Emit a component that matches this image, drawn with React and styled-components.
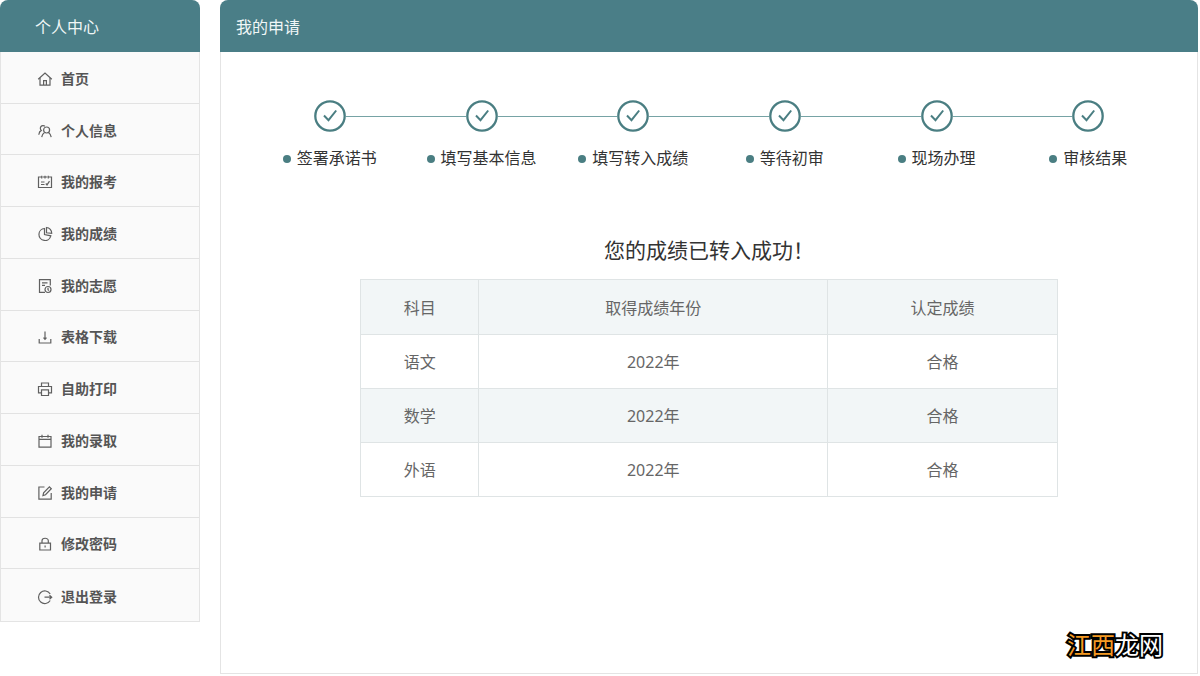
import React from "react";
import styled, { createGlobalStyle } from "styled-components";

const GlobalStyle = createGlobalStyle`
  *, *::before, *::after { box-sizing: border-box; }
  body {
    margin: 0;
    background: #fff;
    color: #333;
    font-family: "Noto Sans", "Noto Sans CJK SC", sans-serif;
    font-size: 16px;
    line-height: 24px;
  }
  h1, h2, p, ul, ol { margin: 0; padding: 0; font-weight: 400; }
  ul, ol { list-style: none; }
`;

const Page = styled.div`
  display: flex;
  align-items: flex-start;
  gap: 20px;
  min-height: 100vh;
  padding: 0 2px 2px 0;
`;

const Sidebar = styled.aside`
  flex: 0 0 200px;
`;

const PanelHeader = styled.header`
  display: flex;
  align-items: center;
  height: 52px;
  padding: 2px ${(p) => p.$inset}px 0;
  border-radius: 8px 8px 0 0;
  background: #4a7e87;
  color: #f0f7f7;
`;

const PanelTitle = styled.h2`
  font-size: 16px;
`;

const Menu = styled.ul`
  display: grid;
  grid-auto-rows: 1fr;
  min-height: 570px;
  border: 1px solid #e4e4e4;
  border-top: 0;
  background: #fafafa;
`;

const MenuItem = styled.li`
  display: flex;
  border-bottom: 1px solid #e2e2e2;
  &:last-child { border-bottom: 0; }
`;

const MenuLink = styled.a`
  display: flex;
  flex: 1;
  align-items: center;
  gap: 8px;
  padding: 3px 0 0 36px;
  color: #555;
  font-size: 14px;
  font-weight: 700;
  text-decoration: none;
`;

const Icon = styled.svg`
  flex: none;
  width: 16px;
  height: 16px;
  fill: none;
  stroke: #606060;
  stroke-width: 1.2;
`;

const Main = styled.main`
  position: relative;
  display: flex;
  flex: 1;
  flex-direction: column;
  align-self: stretch;
  min-width: 0;
`;

const Content = styled.div`
  flex: 1;
  padding: 48px 33px 24px;
  border: 1px solid #e4e4e4;
  border-top: 0;
`;

const Steps = styled.ol`
  display: flex;
`;

const StepItem = styled.li`
  display: grid;
  flex: 1;
  grid-template-columns: 1fr 32px 1fr;
  align-items: center;
  row-gap: 14px;
`;

const Connector = styled.span`
  height: 1px;
  background: ${(p) => (p.$hidden ? "transparent" : "#76a3a5")};
`;

const StepMark = styled.svg`
  width: 32px;
  height: 32px;
  fill: none;
  stroke: #4a7e82;
`;

const StepLabel = styled.span`
  display: flex;
  grid-column: 1 / -1;
  align-items: center;
  justify-content: center;
  gap: 6px;
  white-space: nowrap;
`;

const Dot = styled.span`
  width: 8px;
  height: 8px;
  margin-top: 2px;
  border-radius: 50%;
  background: #4a7e82;
`;

const ResultTitle = styled.h1`
  margin-top: 64px;
  font-size: 21px;
  line-height: 32px;
  text-align: center;
`;

const ScoreTable = styled.table`
  width: 100%;
  max-width: 698px;
  margin: 13px auto 0;
  border-collapse: collapse;
  table-layout: fixed;
  color: #666;
  text-align: center;
`;

const Column = styled.col`
  width: ${(p) => p.$share}%;
`;

const Row = styled.tr`
  height: 54px;
  background: ${(p) => (p.$shaded ? "#f2f6f7" : "#fff")};
`;

const HeadCell = styled.th`
  height: 55px;
  padding: 2px 0 0;
  border: 1px solid #dfe4e5;
  font-weight: 400;
`;

const Cell = styled.td`
  padding: 0;
  border: 1px solid #dfe4e5;
`;

const SiteMark = styled.p`
  position: absolute;
  right: 35px;
  bottom: 13px;
  color: #fff;
  font-size: 24px;
  font-weight: 400;
  line-height: 32px;
  -webkit-text-stroke: 4px #000;
  paint-order: stroke fill;
`;

const SiteMarkAccent = styled.span`
  color: #f59a23;
`;

const icons = {
  home: (
    <>
      <path d="M1.2 8.3 8 2l6.8 6.3" />
      <path d="M3 7v7.2h10V7" />
      <path d="M6.6 14V9.6h2.8V14" />
    </>
  ),
  user: (
    <>
      <path d="M7.9 3.2a2.7 2.7 0 1 0-3.6 4.2C2.8 8.2 2 9.8 1.8 11.8" />
      <circle cx="9.6" cy="7" r="3" />
      <path d="M7.5 9.4C5.9 10.4 5 12 4.7 14.2M11.5 9.4c1.4 1 2.4 2.6 2.7 4.8" />
    </>
  ),
  exam: (
    <>
      <path d="M4 3H1.5v10.5h13V3H12M5.500 3h5" />
      <path d="M4.700 1.800v2.700M8 1.800v2.700M11.300 1.800v2.700M4 8h3.500M4 10.500h3.500" />
      <path d="m8.800 9.500 1.200 1.400 2.500-3.800" />
    </>
  ),
  chart: (
    <>
      <path d="M7.500 2.500a6 6 0 1 0 6.300 7.300L7.500 8.500z" />
      <path d="M9.500 1.500v5.300l5.200.5c.1-3-2.100-5.600-5.200-5.800z" />
    </>
  ),
  form: (
    <>
      <path d="M8 14.4H2.500V1.600h10.800v6" />
      <path d="M5 4.800h5.500M5 7.300h3" />
      <circle cx="11" cy="11.500" r="3" />
      <path d="M11 9.800v2l1 .8" />
    </>
  ),
  download: (
    <>
      <path d="M2.200 10v4h11.600v-4" />
      <path d="M8 2.500v7.700M6.500 8.700 8 10.300l1.500-1.600" />
    </>
  ),
  print: (
    <>
      <path d="M4.500 5.500V2h7v3.500" />
      <path d="M4.500 11.800H1.500V5.500h13v6.300h-3" />
      <path d="M4.500 8.800h7v5.700h-7z" />
    </>
  ),
  calendar: (
    <>
      <path d="M2 3.500h12v10.700H2zM2 6.300h12" />
      <path d="M5 1.800v3M11 1.800v3" />
    </>
  ),
  edit: (
    <>
      <path d="M7.500 2H1.900v12.200h12.300V8" />
      <path d="m6 10.500.6-2.700 5.800-5.900 1.900 1.800-5.800 6z" />
    </>
  ),
  lock: (
    <>
      <path d="M2.800 7.200h10.700v6.800H2.800z" />
      <path d="M5 7V4.800C5 1.400 11.300 1.400 11.300 4.800V7M8.100 9.500v2" />
    </>
  ),
  logout: (
    <>
      <path d="M13.200 5A6.300 6.300 0 1 0 13.200 11.500" />
      <path d="M7.500 8.200h7M12.500 6.200l2.200 2-2.200 2" />
    </>
  ),
};

const menu = [
  ["home", "首页"],
  ["user", "个人信息"],
  ["exam", "我的报考"],
  ["chart", "我的成绩"],
  ["form", "我的志愿"],
  ["download", "表格下载"],
  ["print", "自助打印"],
  ["calendar", "我的录取"],
  ["edit", "我的申请"],
  ["lock", "修改密码"],
  ["logout", "退出登录"],
];

const steps = ["签署承诺书", "填写基本信息", "填写转入成绩", "等待初审", "现场办理", "审核结果"];

const scores = [
  ["语文", "2022年", "合格"],
  ["数学", "2022年", "合格"],
  ["外语", "2022年", "合格"],
];

export default function App() {
  return (
    <Page>
      <GlobalStyle />
      <Sidebar>
        <PanelHeader $inset={35}>
          <PanelTitle>个人中心</PanelTitle>
        </PanelHeader>
        <nav>
          <Menu>
            {menu.map(([icon, label]) => (
              <MenuItem key={label}>
                <MenuLink href={`#${icon}`}>
                  <Icon viewBox="0 0 16 16" aria-hidden="true">{icons[icon]}</Icon>
                  {label}
                </MenuLink>
              </MenuItem>
            ))}
          </Menu>
        </nav>
      </Sidebar>
      <Main>
        <PanelHeader $inset={16}>
          <PanelTitle>我的申请</PanelTitle>
        </PanelHeader>
        <Content>
          <Steps>
            {steps.map((label, i) => (
              <StepItem key={label}>
                <Connector $hidden={i === 0} />
                <StepMark viewBox="0 0 32 32" aria-hidden="true">
                  <circle cx="16" cy="16" r="14.7" strokeWidth="2.3" />
                  <path d="m10 15.500 4.500 4.700 7.700-9.700" strokeWidth="2" />
                </StepMark>
                <Connector $hidden={i === steps.length - 1} />
                <StepLabel>
                  <Dot />
                  {label}
                </StepLabel>
              </StepItem>
            ))}
          </Steps>
          <ResultTitle>您的成绩已转入成功！</ResultTitle>
          <ScoreTable>
            <colgroup>
              <Column $share={17} />
              <Column $share={50} />
              <Column $share={33} />
            </colgroup>
            <thead>
              <Row $shaded>
                <HeadCell scope="col">科目</HeadCell>
                <HeadCell scope="col">取得成绩年份</HeadCell>
                <HeadCell scope="col">认定成绩</HeadCell>
              </Row>
            </thead>
            <tbody>
              {scores.map(([subject, year, result], i) => (
                <Row key={subject} $shaded={i % 2 === 1}>
                  <Cell>{subject}</Cell>
                  <Cell>{year}</Cell>
                  <Cell>{result}</Cell>
                </Row>
              ))}
            </tbody>
          </ScoreTable>
        </Content>
        <SiteMark>
          <SiteMarkAccent>江西</SiteMarkAccent>龙网
        </SiteMark>
      </Main>
    </Page>
  );
}
